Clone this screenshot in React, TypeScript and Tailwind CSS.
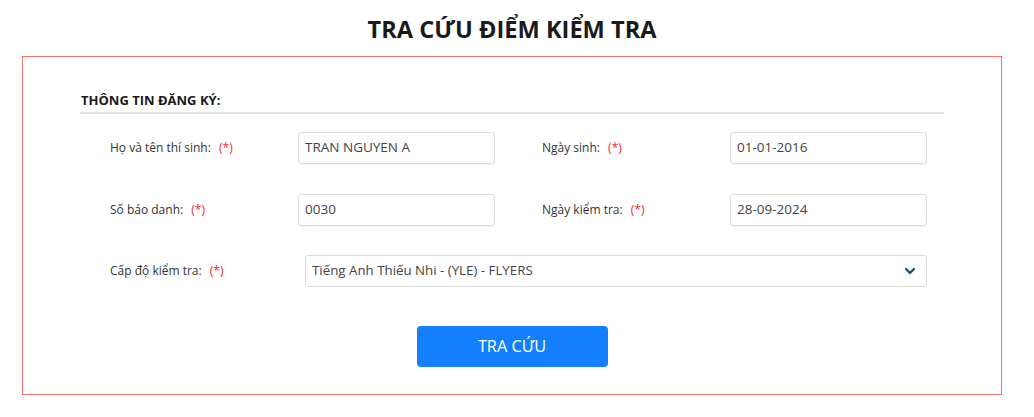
import { ChevronDown } from 'lucide-react';

const font = { fontFamily: '"Open Sans", "Noto Sans", sans-serif' };

function Label({ text }: { text: string }) {
  return (
    <div className="w-[218px] shrink-0 pl-[30px] text-[12px] text-[#333]">
      {text} <span className="ml-[5px] text-[#f0282d]">(*)</span>
    </div>
  );
}

function Field({ label, value }: { label: string; value: string }) {
  return (
    <div className="flex w-1/2 items-center">
      <Label text={label} />
      <div className="flex h-[32px] w-[197px] items-center rounded-[3px] border border-[#dcdcdc] px-[6px] text-[13.5px] text-[#444] shadow-[0_1px_1px_rgba(0,0,0,0.04)]">
        {value}
      </div>
    </div>
  );
}

export default function App() {
  return (
    <div className="min-h-[417px] w-[1024px] bg-white px-[22px]" style={font}>
      <h1 className="pt-[13px] text-center text-[23.6px] font-bold leading-[32px] text-[#1a1a1a]">
        TRA CỨU ĐIỂM KIỂM TRA
      </h1>
      <div className="mt-[11px] h-[339px] w-[980px] border border-[#f87171] px-[57px] pt-[34px]">
        <div className="border-b-2 border-[#e2e2e2] pb-[1px] pl-[1px] text-[13px] font-bold text-[#1a1a1a]">
          THÔNG TIN ĐĂNG KÝ:
        </div>
        <div className="mt-[18px] flex">
          <Field label="Họ và tên thí sinh:" value="TRAN NGUYEN A" />
          <Field label="Ngày sinh:" value="01-01-2016" />
        </div>
        <div className="mt-[30px] flex">
          <Field label="Số báo danh:" value="0030" />
          <Field label="Ngày kiểm tra:" value="28-09-2024" />
        </div>
        <div className="mt-[29px] flex items-center">
          <Label text="Cấp độ kiểm tra:" />
          <div className="ml-[7px] flex h-[32px] w-[622px] items-center justify-between rounded-[3px] border border-[#dcdcdc] pl-[6px] pr-[8px] text-[13.3px] text-[#444]">
            <span>Tiếng Anh Thiếu Nhi - (YLE) - FLYERS</span>
            <ChevronDown size={16} strokeWidth={3.5} className="text-[#1d4f73]" />
          </div>
        </div>
        <div className="mt-[39px] flex justify-center">
          <button className="h-[41px] w-[191px] rounded-[4px] bg-[#137ffc] text-[16.3px] text-white">
            TRA CỨU
          </button>
        </div>
      </div>
    </div>
  );
}
